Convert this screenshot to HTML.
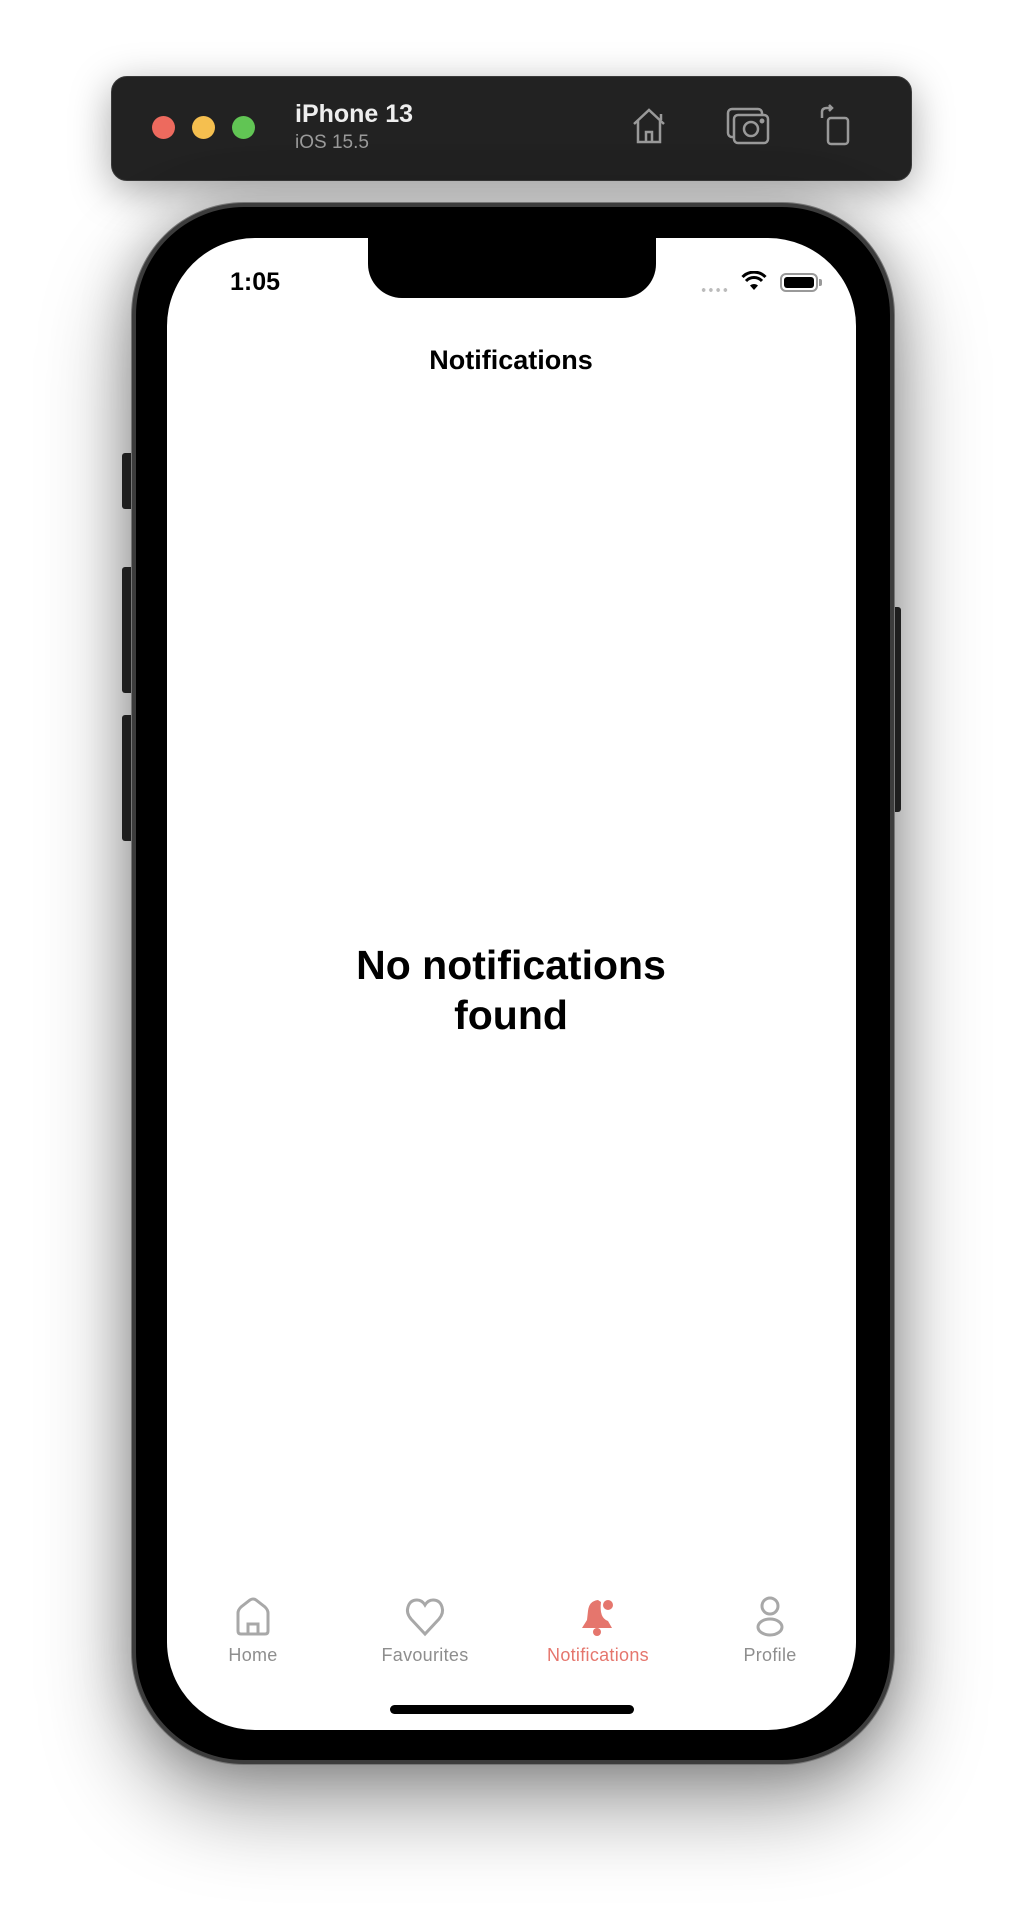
<!DOCTYPE html>
<html><head><meta charset="utf-8"><style>
*{margin:0;padding:0;box-sizing:border-box}
body{width:1022px;height:1914px;background:#fff;position:relative;overflow:hidden;font-family:"Liberation Sans",sans-serif}
.abs{position:absolute}
.bar{left:111px;top:76px;width:801px;height:105px;background:#222;border-radius:16px;box-shadow:0 10px 40px rgba(0,0,0,.35);border:1px solid #3a3a3a}
.dot{width:23px;height:23px;border-radius:50%;top:116px}
.phone{left:132px;top:203px;width:762px;height:1561px;border-radius:112px;background:#000;border:4px solid #3c3c3c;box-shadow:0 0 0 1px #777,0 40px 90px rgba(0,0,0,.4),0 0 50px rgba(0,0,0,.25)}
.screen{left:167px;top:238px;width:689px;height:1492px;border-radius:88px;background:#fff;overflow:hidden}
.btn{background:#2a2a2a;border-radius:3px}
.lab{font-size:18px;color:#8e8e8e;width:170px;text-align:center;top:1645px;letter-spacing:0.3px}
</style></head><body>
<div class="abs bar"></div>
<div class="abs dot" style="left:152px;background:#ed6a5e"></div>
<div class="abs dot" style="left:192px;background:#f5bf4f"></div>
<div class="abs dot" style="left:232px;background:#61c554"></div>
<div class="abs" style="left:295px;top:100px;color:#eee;font-size:25px;font-weight:bold">iPhone 13</div>
<div class="abs" style="left:295px;top:132px;color:#9a9a9a;font-size:19px">iOS 15.5</div>
<svg class="abs" style="left:628px;top:106px" width="42" height="40" viewBox="0 0 42 40" fill="none" stroke="#999" stroke-width="2.5"><path d="M6 18 L21 4 L36 18 M10 15 V36 H32 V15 M18 36 V26 H24 V36 M33 8 V14"/></svg>
<svg class="abs" style="left:725px;top:106px" width="46" height="40" viewBox="0 0 46 40" fill="none" stroke="#999" stroke-width="2.5"><rect x="3" y="3" width="34" height="28" rx="4"/><rect x="9" y="9" width="34" height="28" rx="4" fill="#222"/><circle cx="26" cy="23" r="7"/><circle cx="37" cy="15" r="1.2" fill="#999"/></svg>
<svg class="abs" style="left:818px;top:104px" width="36" height="42" viewBox="0 0 36 42" fill="none" stroke="#999" stroke-width="2.5"><rect x="10" y="14" width="20" height="26" rx="3"/><path d="M4 14 V8 Q4 4 9 4 H14 M11 1 L14 4 L11 7"/></svg>

<div class="abs btn" style="left:122px;top:453px;width:12px;height:56px"></div>
<div class="abs btn" style="left:122px;top:567px;width:12px;height:126px"></div>
<div class="abs btn" style="left:122px;top:715px;width:12px;height:126px"></div>
<div class="abs btn" style="left:890px;top:607px;width:11px;height:205px"></div>
<div class="abs phone"></div>
<div class="abs screen">
 <div class="abs" style="left:201px;top:-2px;width:288px;height:62px;background:#000;border-radius:0 0 34px 34px"></div>
</div>
<div class="abs" style="left:230px;top:268px;font-size:25px;font-weight:bold;color:#000">1:05</div>
<div class="abs" style="left:700px;top:288px;width:29px;height:4px;background-image:radial-gradient(circle,#bbb 1.8px,transparent 2px);background-size:7.25px 4px"></div>
<svg class="abs" style="left:741px;top:271px" width="26" height="20" viewBox="0 0 26 20"><path d="M13 19 L9 14.5 A6 6 0 0 1 17 14.5 Z" fill="#000"/><path d="M5 10 A11 11 0 0 1 21 10" stroke="#000" stroke-width="3" fill="none"/><path d="M1.5 6 A16 16 0 0 1 24.5 6" stroke="#000" stroke-width="3" fill="none"/></svg>
<div class="abs" style="left:780px;top:273px;width:38px;height:19px;border:2px solid #999;border-radius:6px;padding:2px"><div style="background:#000;width:100%;height:100%;border-radius:3px"></div></div>
<div class="abs" style="left:819px;top:279px;width:3px;height:7px;background:#999;border-radius:0 2px 2px 0"></div>
<div class="abs" style="left:311px;top:345px;width:400px;text-align:center;font-size:27px;font-weight:bold;color:#000">Notifications</div>
<div class="abs" style="left:261px;top:940px;width:500px;text-align:center;font-size:41px;font-weight:bold;line-height:50px;color:#000">No notifications<br>found</div>

<svg class="abs" style="left:234px;top:1597px" width="38" height="40" viewBox="0 0 38 40" fill="none" stroke="#a8a8a8" stroke-width="3"><path d="M4 16 Q4 13 7 10 L16 3 Q19 1 22 3 L31 10 Q34 13 34 16 V34 Q34 37 31 37 H7 Q4 37 4 34 Z"/><path d="M14 37 V27 H24 V37"/></svg>
<svg class="abs" style="left:404px;top:1597px" width="42" height="40" viewBox="0 0 42 40" fill="none" stroke="#a8a8a8" stroke-width="3"><path d="M21 37 L7 22 Q2 16 4 10 Q6 3 13 3 Q18 3 21 8 Q24 3 29 3 Q36 3 38 10 Q40 16 35 22 Z"/></svg>
<svg class="abs" style="left:578px;top:1597px" width="40" height="40" viewBox="0 0 40 40" fill="#e5766d"><circle cx="30" cy="8" r="5"/><path d="M20 3 Q11 4 10 14 L9 23 L4 31 H34 L30 24 Q21 21 23 5 Z"/><circle cx="19" cy="35" r="4"/></svg>
<svg class="abs" style="left:751px;top:1594px" width="38" height="44" viewBox="0 0 38 44" fill="none" stroke="#a8a8a8" stroke-width="3"><circle cx="19" cy="12" r="8"/><ellipse cx="19" cy="33" rx="12" ry="8"/></svg>
<div class="abs lab" style="left:168px">Home</div>
<div class="abs lab" style="left:340px">Favourites</div>
<div class="abs lab" style="left:513px;color:#e5766d">Notifications</div>
<div class="abs lab" style="left:685px">Profile</div>
<div class="abs" style="left:390px;top:1705px;width:244px;height:9px;background:#000;border-radius:5px"></div>
</body></html>
